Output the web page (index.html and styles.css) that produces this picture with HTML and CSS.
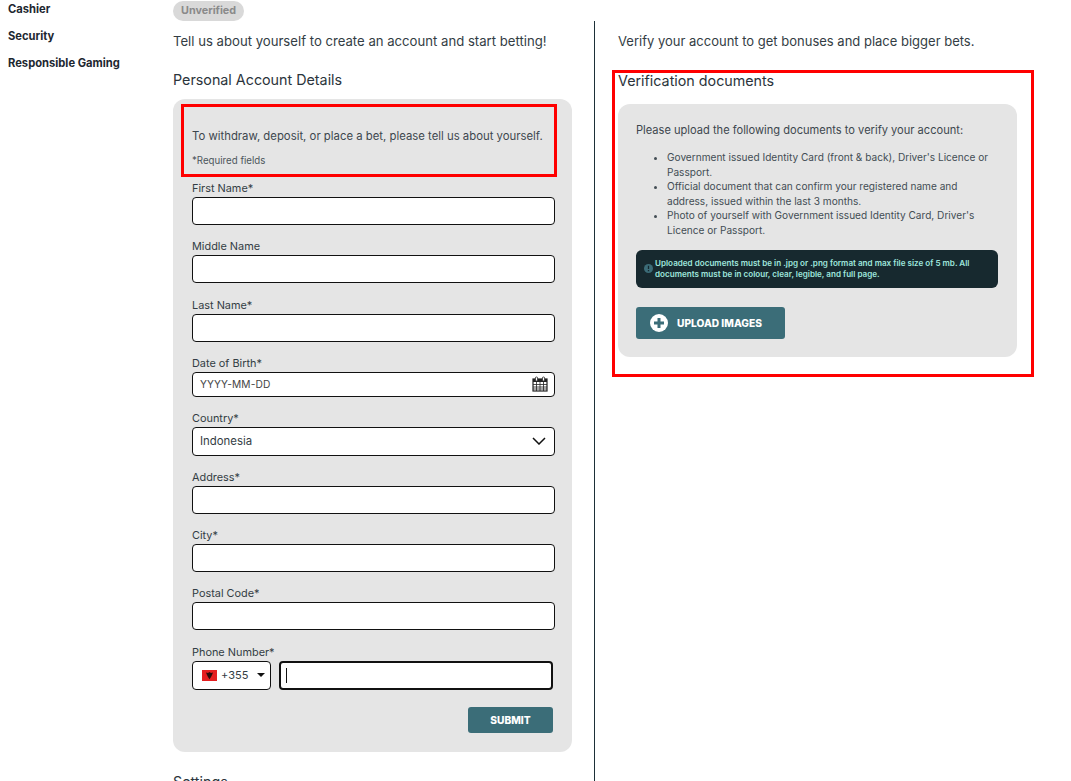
FILE: index.html
```html
<!DOCTYPE html>
<html lang="en">
<head>
  <meta charset="UTF-8">
  <title>Personal Account Details</title>
  <link rel="stylesheet" href="styles.css">
</head>
<body>
  <div class="page">
    <nav class="side">
      <a>Cashier</a>
      <a>Security</a>
      <a>Responsible Gaming</a>
    </nav>

    <div class="left">
      <span class="badge">Unverified</span>
      <p class="lead">Tell us about yourself to create an account and start betting!</p>
      <h2 class="title">Personal Account Details</h2>
      <form class="card form-card">
        <div class="intro">
          <p class="intro-text">To withdraw, deposit, or place a bet, please tell us about yourself.</p>
          <p class="req">*Required fields</p>
        </div>

        <div class="field"><label>First Name*</label><div class="box"></div></div>
        <div class="field"><label>Middle Name</label><div class="box"></div></div>
        <div class="field"><label>Last Name*</label><div class="box"></div></div>
        <div class="field"><label>Date of Birth*</label>
          <div class="box box-date">
            <span class="hint">YYYY-MM-DD</span>
            <svg width="16" height="16" viewBox="0 0 16 16">
              <rect x="1" y="3" width="14" height="12" fill="#fff" stroke="#222" stroke-width="1.2"/>
              <rect x="1" y="3" width="14" height="3" fill="#222"/>
              <path d="M1 8.5H15M1 11H15M1 13H15M4.5 6V15M8 6V15M11.5 6V15" stroke="#222" stroke-width=".8"/>
              <rect x="3.4" y="1" width="2.2" height="4" rx="1" fill="#fff" stroke="#222" stroke-width=".8"/>
              <rect x="10.4" y="1" width="2.2" height="4" rx="1" fill="#fff" stroke="#222" stroke-width=".8"/>
            </svg>
          </div>
        </div>
        <div class="field"><label>Country*</label>
          <div class="box box-select">
            <span class="value">Indonesia</span>
            <svg width="14" height="8" viewBox="0 0 14 8"><path d="M1 1L7 7L13 1" fill="none" stroke="#111" stroke-width="1.5"/></svg>
          </div>
        </div>
        <div class="field"><label>Address*</label><div class="box"></div></div>
        <div class="field"><label>City*</label><div class="box"></div></div>
        <div class="field"><label>Postal Code*</label><div class="box"></div></div>
        <div class="field"><label>Phone Number*</label>
          <div class="phone">
            <div class="box dial">
              <svg width="15" height="11" viewBox="0 0 15 11">
                <rect width="15" height="11" fill="#e41e20"/>
                <path d="M7.5 2L9 3L11 2.6L10 5L9 7L7.5 9.2L6 7L5 5L4 2.6L6 3Z" fill="#2b0b0b"/>
              </svg>
              <span class="value">+355</span>
              <svg class="caret" width="8" height="4" viewBox="0 0 8 4"><path d="M0 0H8L4 4Z" fill="#111"/></svg>
            </div>
            <div class="box box-focus"><span class="cursor"></span></div>
          </div>
        </div>
        <div class="actions"><button type="button" class="btn submit">SUBMIT</button></div>
      </form>
      <h2 class="title settings">Settings</h2>
    </div>

    <div class="right">
      <p class="lead">Verify your account to get bonuses and place bigger bets.</p>
      <h2 class="title doc-title">Verification documents</h2>
      <div class="card doc-card">
        <p class="doc-text">Please upload the following documents to verify your account:</p>
        <ul class="doc-list">
          <li>Government issued Identity Card (front &amp; back), Driver's Licence or Passport.</li>
          <li>Official document that can confirm your registered name and address, issued within the last 3 months.</li>
          <li>Photo of yourself with Government issued Identity Card, Driver's Licence or Passport.</li>
        </ul>
        <div class="notice">
          <svg width="9" height="9" viewBox="0 0 9 9"><circle cx="4.5" cy="4.5" r="4.5" fill="#3c6c78"/><path d="M4.5 1.8V5M4.5 6V7.2" stroke="#14282f" stroke-width="1.3"/></svg>
          <span>Uploaded documents must be in .jpg or .png format and max file size of 5 mb. All documents must be in colour, clear, legible, and full page.</span>
        </div>
        <button type="button" class="btn upload">
          <svg width="18" height="18" viewBox="0 0 18 18"><circle cx="9" cy="9" r="9" fill="#fff"/><path d="M9 4V14M4 9H14" stroke="#3b6d78" stroke-width="3"/></svg>
          UPLOAD IMAGES
        </button>
      </div>
    </div>

    <div class="mark mark-intro"></div>
    <div class="mark mark-docs"></div>
  </div>
</body>
</html>
```

FILE: styles.css
```css
html, body {
  margin: 0;
  height: 781px;
  overflow: hidden;
  background: #fff;
}

body {
  font-family: Inter, "Open Sans", sans-serif;
  color: #2e3a42;
}

.page {
  position: relative;
  display: flex;
  height: 781px;
  overflow: hidden;
}

.side {
  width: 173px;
  flex: none;
  padding: 2px 0 0 8px;
  box-sizing: border-box;
  display: flex;
  flex-direction: column;
  gap: 13px;
}

.side a {
  font-size: 11.2px;
  line-height: 14px;
  font-weight: 700;
  color: #1d2730;
}

.left {
  width: 399px;
  flex: none;
}

.right {
  width: 400px;
  flex: none;
  margin-left: 22px;
  margin-top: 21px;
  padding-left: 23px;
  border-left: 1px solid #1d3038;
}

.badge {
  display: block;
  width: fit-content;
  height: 20px;
  line-height: 20px;
  margin-top: 1px;
  padding: 0 8px;
  border-radius: 10px;
  background: #d9d9d9;
  color: #8a8a8a;
  font-size: 10.8px;
  font-weight: 700;
}

.lead {
  margin: 10px 0 0;
  font-size: 13.15px;
  line-height: 20px;
  color: #333d44;
}

.right .lead {
  margin-top: 10px;
  font-size: 13px;
}

.title {
  margin: 19px 0 0;
  font-size: 14.3px;
  line-height: 20px;
  font-weight: 400;
  color: #2b343b;
}

.doc-title {
  margin-top: 20px;
}

.settings {
  margin-top: 20px;
}

.card {
  background: #e5e5e5;
  border-radius: 12px;
}

.form-card {
  margin-top: 9px;
  height: 653px;
  box-sizing: border-box;
  padding: 29px 17px 0 19px;
}

.intro-text {
  margin: 0;
  font-size: 11.35px;
  line-height: 16px;
  color: #3d474e;
}

.req {
  margin: 10px 0 0;
  font-size: 9.7px;
  line-height: 14px;
  color: #4c555b;
}

.field {
  margin-top: 13.3px;
}

.intro + .field {
  margin-top: 12px;
}

.field label {
  display: block;
  font-size: 10.9px;
  line-height: 17px;
  color: #333d44;
}

.box {
  box-sizing: border-box;
  height: 28px;
  background: #fff;
  border: 1px solid #111;
  border-radius: 4px;
  display: flex;
  align-items: center;
  padding: 0 7px;
  font-size: 11.4px;
  color: #333d44;
}

.box-date {
  height: 25px;
  justify-content: space-between;
  padding-right: 6px;
}

.hint {
  font-size: 10.2px;
  letter-spacing: .1px;
  color: #444;
}

.box-select {
  height: 28.4px;
  justify-content: space-between;
  padding-right: 8px;
}

.phone {
  display: flex;
  gap: 8px;
}

.dial {
  width: 79px;
  height: 29px;
  flex: none;
  padding: 0 5px 0 9px;
}

.dial .value {
  margin-left: 4px;
  font-size: 11px;
}

.caret {
  margin-left: auto;
}

.box-focus {
  flex: 1;
  height: 29px;
  margin-right: 2px;
  border-width: 2px;
  padding: 0 5px;
}

.cursor {
  width: 1px;
  height: 15px;
  background: #111;
}

.actions {
  display: flex;
  justify-content: flex-end;
  margin-top: 17.6px;
  padding-right: 2px;
}

.btn {
  border: none;
  border-radius: 3px;
  background: #3b6d78;
  color: #fff;
  font-family: inherit;
  font-weight: 800;
  font-size: 10.2px;
}

.submit {
  width: 85px;
  height: 26px;
  padding: 0;
}

.doc-card {
  margin-top: 13px;
  width: 399px;
  height: 253px;
  box-sizing: border-box;
  padding: 18px 19px 0 18px;
}

.doc-text {
  margin: 0;
  font-size: 11.1px;
  line-height: 16px;
  color: #3d474e;
}

.doc-list {
  margin: 12px 0 0;
  padding-left: 31px;
  font-size: 10.1px;
  line-height: 14.6px;
  color: #434d54;
}

.notice {
  margin-top: 12px;
  height: 38px;
  box-sizing: border-box;
  border-radius: 6px;
  background: #17292f;
  color: #9fe6dd;
  display: flex;
  align-items: center;
  gap: 2px;
  padding: 0 8px;
  font-size: 8.1px;
  line-height: 11px;
  font-weight: 600;
}

.notice svg {
  flex: none;
}

.upload {
  margin-top: 19px;
  width: 149px;
  height: 32px;
  display: flex;
  align-items: center;
  gap: 9px;
  padding: 0 14px;
}

.mark {
  position: absolute;
  box-sizing: border-box;
  border: 3px solid #f00;
}

.mark-intro {
  left: 181px;
  top: 104px;
  width: 376px;
  height: 73px;
}

.mark-docs {
  left: 612px;
  top: 70px;
  width: 422px;
  height: 307px;
}
```
